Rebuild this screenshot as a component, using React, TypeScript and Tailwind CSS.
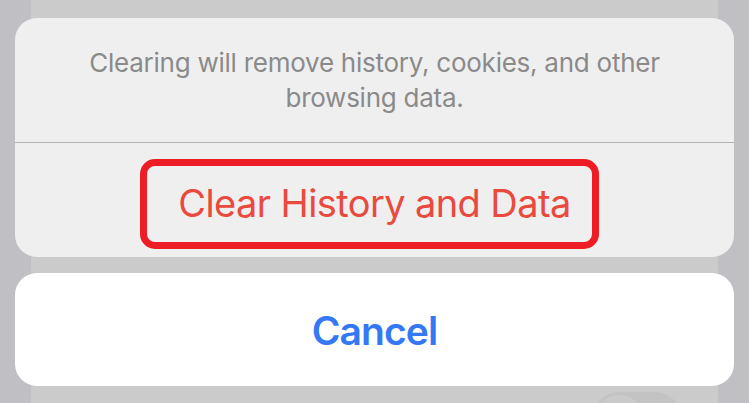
import React from "react";

export default function App() {
  const font = { fontFamily: "Inter, 'Noto Sans', 'Liberation Sans', sans-serif" };
  return (
    <div className="relative w-[749px] h-[403px] overflow-hidden bg-[#c0bfc4]" style={font}>
      {/* dimmed page underneath */}
      <div className="mx-[31px] h-full bg-[#cbcbcb] pt-[392px] pr-[36px] flex justify-end">
        <div className="w-[90px] h-[55px] rounded-full bg-[#c3c3c3] p-[3px]">
          <div className="w-[49px] h-[49px] rounded-full bg-[#cacaca]" />
        </div>
      </div>

      {/* action sheet */}
      <div className="absolute inset-0 px-[15px] pt-[18px] flex flex-col gap-[16px]">
        <div className="rounded-[22px] bg-[#efefef] overflow-hidden">
          <div className="py-[27px] px-[60px] text-center text-[26px] leading-[35px] text-[#8a8a8a] tracking-[-0.25px]">
            Clearing will remove history, cookies, and other browsing data.
          </div>
          <div className="h-px bg-[#b4b4b4]" />
          <div className="relative h-[114px] flex items-center justify-center">
            <span className="text-[38px] leading-none text-[#ea4a3e] tracking-[-0.6px] translate-y-[3px]">
              Clear History and Data
            </span>
            <div className="absolute left-[125px] top-[16px] w-[459px] h-[90px] rounded-[15px] border-[7px] border-[#ee1c25]" />
          </div>
        </div>
        <div className="h-[113px] rounded-[22px] bg-white flex items-center justify-center">
          <span className="text-[39px] leading-none font-semibold text-[#3478f6] tracking-[-0.9px] translate-y-[1px]">
            Cancel
          </span>
        </div>
      </div>
    </div>
  );
}
